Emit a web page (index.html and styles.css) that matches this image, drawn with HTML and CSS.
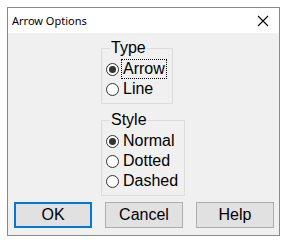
FILE: index.html
```html
<!DOCTYPE html>
<html lang="en">
<head>
    <meta charset="UTF-8">
    <title>Arrow Options</title>
    <link rel="stylesheet" href="styles.css">
</head>
<body>

    <div class="dialog">
        <div class="title-bar">
            <span class="title">Arrow Options</span>
            <svg class="close" width="12" height="12" viewBox="0 0 12 12">
                <path d="M1 1 L11 11 M11 1 L1 11" stroke="#000" stroke-width="1.1" fill="none"/>
            </svg>
        </div>

        <div class="content">
            <fieldset class="group type-group">
                <legend>Type</legend>
                <label class="radio"><span class="dot checked"></span><span class="focus">Arrow</span></label>
                <label class="radio"><span class="dot"></span><span>Line</span></label>
            </fieldset>

            <fieldset class="group style-group">
                <legend>Style</legend>
                <label class="radio"><span class="dot checked"></span><span>Normal</span></label>
                <label class="radio"><span class="dot"></span><span>Dotted</span></label>
                <label class="radio"><span class="dot"></span><span>Dashed</span></label>
            </fieldset>

            <div class="buttons">
                <button class="btn default">OK</button>
                <button class="btn">Cancel</button>
                <button class="btn">Help</button>
            </div>
        </div>
    </div>

</body>
</html>
```

FILE: styles.css
```css
* {
    margin: 0;
    padding: 0;
    box-sizing: border-box;
}

body {
    background: #fff;
    padding: 7px;
    font-family: 'Liberation Sans', Arial, sans-serif;
}

.dialog {
    width: 273px;
    height: 229px;
    border: 1px solid #8a8a8a;
    background: #f0f0f0;
    display: flex;
    flex-direction: column;
}

.title-bar {
    height: 25px;
    background: #fff;
    display: flex;
    align-items: center;
    justify-content: space-between;
    padding: 0 10px 0 4px;
}

.title {
    font-family: 'Noto Sans', sans-serif;
    font-size: 11px;
    color: #000;
}

.close {
    display: block;
}

.content {
    flex: 1;
    display: flex;
    flex-direction: column;
    align-items: flex-start;
    padding: 8px 6px 0 93px;
}

.group {
    border: 1px solid #dcdcdc;
    padding: 4px 0 0 4px;
    display: flex;
    flex-direction: column;
}

.group legend {
    font-size: 16px;
    color: #000;
    padding: 0 1px;
    margin-left: 4px;
    line-height: 14px;
}

.type-group {
    width: 72px;
    height: 63px;
}

.style-group {
    width: 84px;
    height: 83px;
    margin-top: 9px;
}

.radio {
    display: flex;
    align-items: center;
    height: 20px;
    font-size: 16px;
    color: #000;
}

.dot {
    width: 13px;
    height: 13px;
    border: 1px solid #333;
    border-radius: 50%;
    background: #fff;
    margin-right: 4px;
    display: flex;
    align-items: center;
    justify-content: center;
}

.dot.checked::after {
    content: "";
    width: 7px;
    height: 7px;
    border-radius: 50%;
    background: #333;
}

.focus {
    outline: 1px dotted #000;
    outline-offset: 0;
    padding: 0 1px;
    margin-left: -1px;
}

.buttons {
    display: flex;
    gap: 13px;
    margin-top: 6px;
    margin-left: -87px;
}

.btn {
    width: 78px;
    height: 26px;
    background: #e1e1e1;
    border: 1px solid #adadad;
    font-family: 'Liberation Sans', Arial, sans-serif;
    font-size: 16px;
    color: #000;
}

.btn.default {
    border: 2px solid #0078d7;
}
```
